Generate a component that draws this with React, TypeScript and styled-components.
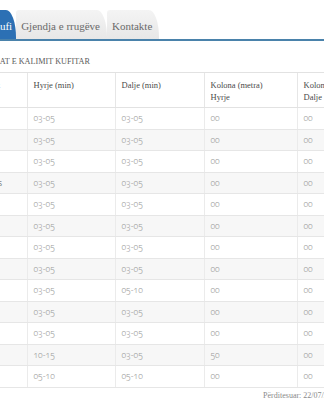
import React from "react";
import styled, { createGlobalStyle } from "styled-components";

const Global = createGlobalStyle`
  html, body { margin: 0; padding: 0; background: #ffffff; }
  body { overflow: hidden; }
`;

const Page = styled.div`
  width: 416px;
  margin-left: -56px;
  font-family: "Liberation Serif", "DejaVu Serif", serif;
`;

const TabBar = styled.div`
  display: flex;
  align-items: flex-end;
  padding-left: 43px;
  padding-top: 10px;
  border-bottom: 2px solid #4a82ab;
`;

const Tab = styled.div<{ $active?: boolean }>`
  height: 27px;
  display: flex;
  align-items: center;
  padding: 2px ${(p) => (p.$active ? 4 : 7)}px 0 5px;
  font-size: 11px;
  color: ${(p) => (p.$active ? "#ffffff" : "#6a6a6a")};
  background: ${(p) =>
    p.$active ? "#2c70b4" : "linear-gradient(#f4f4f4, #e7e7e7)"};
  border-radius: 3px 10px 0 0 / 3px 27px 0 0;
`;

const Title = styled.div`
  padding: 16px 0 0 38px;
  font-size: 8.2px;
  color: #5a5a5a;
  text-transform: uppercase;
  height: 15px;
`;

const Table = styled.table`
  border-collapse: collapse;
  table-layout: fixed;
  width: 416px;
`;

const HeadCell = styled.th<{ $w: number }>`
  box-sizing: border-box;
  width: ${(p) => p.$w}px;
  text-align: left;
  vertical-align: top;
  font-weight: normal;
  font-size: 8.5px;
  line-height: 12px;
  color: #4a4a4a;
  padding: 6px 6px 4px 6px;
  height: 34px;
  border-top: 1px solid #e2e2e2;
  border-bottom: 1px solid #e2e2e2;
  border-left: 1px solid #e6e6e6;
  white-space: nowrap;
  overflow: hidden;
  &:first-child { border-left: none; padding-left: 9px; }
`;

const Row = styled.tr<{ $alt: boolean }>`
  background: ${(p) => (p.$alt ? "#f7f7f7" : "#ffffff")};
`;

const Cell = styled.td`
  box-sizing: border-box;
  height: 21.5px;
  padding: 0 6px;
  font-family: "Noto Sans", "Open Sans", sans-serif;
  font-variant-numeric: oldstyle-nums;
  font-weight: 300;
  font-size: 8.6px;
  color: #999999;
  border-bottom: 1px solid #e6e6e6;
  border-left: 1px solid #ebebeb;
  white-space: nowrap;
  overflow: hidden;
  &:first-child { border-left: none; color: #555; padding-left: 9px; }
`;

const Footer = styled.div`
  text-align: right;
  padding: 3px 0 0 0;
  font-size: 8px;
  color: #8a8a8a;
`;

const rows: [string, string, string, string, string][] = [
  ["Morinë", "03-05", "03-05", "00", "00"],
  ["Vërmicë", "03-05", "03-05", "00", "00"],
  ["Muriqan", "03-05", "03-05", "00", "00"],
  ["Qafë Thanës", "03-05", "03-05", "00", "00"],
  ["Bllatë", "03-05", "03-05", "00", "00"],
  ["Tre Urat", "03-05", "03-05", "00", "00"],
  ["Kapshticë", "03-05", "03-05", "00", "00"],
  ["Kakavijë", "03-05", "03-05", "00", "00"],
  ["Qafë Botë", "03-05", "05-10", "00", "00"],
  ["Goricë", "03-05", "03-05", "00", "00"],
  ["Sukobin", "03-05", "03-05", "00", "00"],
  ["Rinas", "10-15", "03-05", "50", "00"],
  ["Durrës", "05-10", "05-10", "00", "00"],
];

export default function App() {
  return (
    <Page>
      <Global />
      <TabBar>
        <Tab $active>Kufi</Tab>
        <Tab>Gjendja e rrugëve</Tab>
        <Tab>Kontakte</Tab>
      </TabBar>
      <Title>Kohat e kalimit kufitar</Title>
      <Table>
        <thead>
          <tr>
            <HeadCell $w={83}>Pika e kalimit</HeadCell>
            <HeadCell $w={88}>Hyrje (min)</HeadCell>
            <HeadCell $w={89}>Dalje (min)</HeadCell>
            <HeadCell $w={93}>
              Kolona (metra)
              <br />
              Hyrje
            </HeadCell>
            <HeadCell $w={63}>
              Kolona (metra)
              <br />
              Dalje
            </HeadCell>
          </tr>
        </thead>
        <tbody>
          {rows.map((r, i) => (
            <Row key={i} $alt={i % 2 === 1}>
              {r.map((c, j) => (
                <Cell key={j}>{c}</Cell>
              ))}
            </Row>
          ))}
        </tbody>
      </Table>
      <Footer>Përditesuar: 22/07/2019 10:30</Footer>
    </Page>
  );
}
